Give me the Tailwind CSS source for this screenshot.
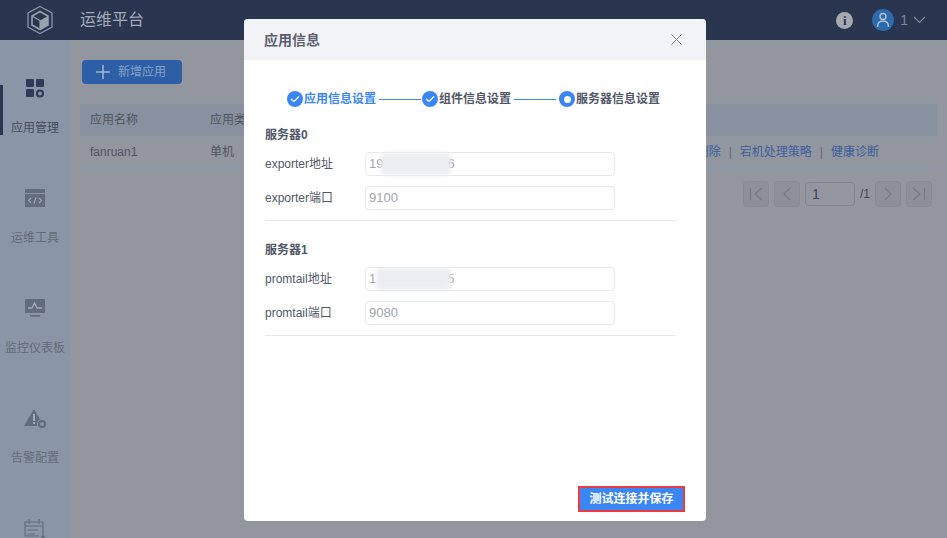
<!DOCTYPE html>
<html lang="zh">
<head>
  <meta charset="UTF-8" />
  <title>运维平台</title>
  <script src="https://cdn.jsdelivr.net/npm/@tailwindcss/browser@4"></script>
</head>
<body class="relative h-[538px] w-[947px] overflow-hidden bg-[#92969e] font-['Liberation_Sans','Noto_Sans_CJK_SC',sans-serif] text-xs text-[#4f5560]">
  <!-- top bar -->
  <header class="flex h-10 items-center bg-[#2a3550]">
    <div class="flex w-20 justify-center">
      <svg width="28" height="30" viewBox="0 0 28 30" fill="none">
        <path d="M14 1.500 26 8v14l-12 6.500L2 22V8z" stroke="#8b92a1" stroke-width="1.300"/>
        <path d="M14 6.500 22 11v9l-8 4.500L6 20v-9z" stroke="#9ba1ae" stroke-width="1.600"/>
        <path d="M14 15.500 22 11v9l-8 4.500z" fill="#9ba1ae"/>
        <path d="M6 11l8 4.500V24.500" stroke="#9ba1ae" stroke-width="1.200"/>
      </svg>
    </div>
    <span class="text-base text-[#a5abb8]">运维平台</span>
    <div class="ml-auto flex items-center pr-[21px]">
      <span class="flex h-[17px] w-[17px] items-center justify-center rounded-full bg-[#a6a9b0] font-['Liberation_Serif',serif] text-[13px] font-bold leading-none text-[#2a3550]">i</span>
      <span class="ml-[19px] flex h-[22px] w-[22px] items-center justify-center rounded-full bg-[#2c6aae]">
        <svg width="14" height="16" viewBox="0 0 14 16" fill="none" stroke="#b6c2d4" stroke-width="1.400">
          <circle cx="7" cy="4.500" r="3"/>
          <path d="M1.500 15c0-4 2.200-6 5.500-6s5.500 2 5.500 6"/>
        </svg>
      </span>
      <span class="ml-[6px] text-sm text-[#7f8798]">1</span>
      <svg class="ml-[5px]" width="13" height="8" viewBox="0 0 13 8" fill="none" stroke="#7f8798" stroke-width="1.200"><path d="M1 1l5.500 5.500L12 1"/></svg>
    </div>
  </header>

  <div class="flex h-[498px]">
    <!-- side nav -->
    <nav class="relative w-[70px] shrink-0 overflow-hidden bg-[#8a95a8] pt-[39px] text-[#656c79]">
      <div class="absolute left-0 top-[45px] h-[50px] w-[3px] bg-[#2a3550]"></div>
      <div class="flex h-[110px] flex-col items-center">
        <svg width="20" height="20" viewBox="0 0 20 20" fill="#2f3b58">
          <rect x="1" y="0" width="8" height="8" rx="1"/><rect x="11" y="0" width="8" height="8" rx="1"/><rect x="1" y="10" width="8" height="8" rx="1"/>
          <circle cx="15" cy="14.500" r="3" fill="none" stroke="#2f3b58" stroke-width="2.200"/>
        </svg>
        <span class="mt-[21px] whitespace-nowrap text-[#464d5c]">应用管理</span>
      </div>
      <div class="flex h-[110px] flex-col items-center">
        <svg width="20" height="20" viewBox="0 0 20 20">
          <rect x="0" y="0" width="20" height="4" fill="#626b7f"/><rect x="0" y="5" width="20" height="13" fill="#626b7f"/>
          <path d="M6 9l-2.500 2.500L6 14M14 9l2.500 2.500L14 14M11 8.500l-2 6" fill="none" stroke="#a2aaba" stroke-width="1.100"/>
        </svg>
        <span class="mt-[21px] whitespace-nowrap">运维工具</span>
      </div>
      <div class="flex h-[110px] flex-col items-center">
        <svg width="20" height="20" viewBox="0 0 20 20">
          <rect x="0" y="0" width="20" height="14" rx="1" fill="#626b7f"/><rect x="5" y="16" width="10" height="1.600" fill="#626b7f"/>
          <path d="M3 9h4l2.500-5 2.500 5h5" fill="none" stroke="#a2aaba" stroke-width="1.300"/>
        </svg>
        <span class="mt-[21px] whitespace-nowrap">监控仪表板</span>
      </div>
      <div class="flex h-[110px] flex-col items-center">
        <svg width="23" height="20" viewBox="0 0 23 20">
          <path d="M10 0 20 17H0z" fill="#626b7f"/><rect x="9" y="5" width="2" height="7" fill="#a2aaba"/><rect x="9" y="13" width="2" height="2" fill="#a2aaba"/>
          <circle cx="18" cy="15" r="5" fill="#8a95a8"/><circle cx="18" cy="15" r="3" fill="none" stroke="#626b7f" stroke-width="2"/>
        </svg>
        <span class="mt-[21px] whitespace-nowrap">告警配置</span>
      </div>
      <div class="flex flex-col items-center">
        <svg width="22" height="20" viewBox="0 0 22 20" fill="none" stroke="#626b7f" stroke-width="1.100">
          <path d="M15 17H1V3h18v10M1 7h18M5 0v5M15 0v5M4 11h10M4 15h7M19 13v6M17 17l2 2 2-2"/>
        </svg>
      </div>
    </nav>

    <!-- page content -->
    <main class="min-w-0 flex-1 pl-[10px] pr-[10px] pt-5">
      <button class="ml-[2px] flex h-6 w-[100px] items-center rounded-sm bg-[#2c5fa5] pl-[14px] text-[#87a1c7]">
        <svg width="14" height="14" viewBox="0 0 14 14" stroke="#a3b6d2" stroke-width="1.500"><path d="M7 0v14M0 7h14"/></svg>
        <span class="ml-[8px]">新增应用</span>
      </button>
      <div class="mt-5 flex h-8 items-center bg-[#88919f] pl-[10px]">
        <span class="w-[120px]">应用名称</span><span>应用类型</span>
      </div>
      <div class="flex h-[33px] items-center border-b border-[#8a99b2] pl-[10px]">
        <span class="w-[120px]">fanruan1</span><span>单机</span>
        <div class="ml-auto flex items-center pr-[58px] text-[#3c5f9f]">
          <span>删除</span><span class="mx-[8px] text-[#62687a]">|</span><span>宕机处理策略</span><span class="mx-[8px] text-[#62687a]">|</span><span>健康诊断</span>
        </div>
      </div>
      <div class="mt-[12px] flex items-center justify-end pr-[5px] text-[#3f4550]">
        <span class="flex h-[26px] w-[26px] items-center justify-center rounded-sm border border-[#868b94] bg-[#8c9099]">
          <svg width="14" height="14" viewBox="0 0 14 14" fill="none" stroke="#757b86" stroke-width="1.200"><path d="M1.500 1v12M13 1 6 7l7 6"/></svg>
        </span>
        <span class="ml-[5px] flex h-[26px] w-[26px] items-center justify-center rounded-sm border border-[#868b94] bg-[#8c9099]">
          <svg width="8" height="14" viewBox="0 0 8 14" fill="none" stroke="#757b86" stroke-width="1.200"><path d="M7 1 1 7l6 6"/></svg>
        </span>
        <span class="ml-[5px] flex h-[24px] w-[50px] items-center rounded-sm border border-[#7f848d] pl-[6px] text-sm">1</span>
        <span class="mx-[5px] w-[10px] text-xs">/1</span>
        <span class="flex h-[26px] w-[26px] items-center justify-center rounded-sm border border-[#868b94] bg-[#8c9099]">
          <svg width="8" height="14" viewBox="0 0 8 14" fill="none" stroke="#757b86" stroke-width="1.200"><path d="M1 1l6 6-6 6"/></svg>
        </span>
        <span class="ml-[5px] flex h-[26px] w-[26px] items-center justify-center rounded-sm border border-[#868b94] bg-[#8c9099]">
          <svg width="14" height="14" viewBox="0 0 14 14" fill="none" stroke="#757b86" stroke-width="1.200"><path d="M12.500 1v12M1 1l7 6-7 6"/></svg>
        </span>
      </div>
    </main>
  </div>

  <!-- dialog -->
  <section class="absolute left-[244px] top-[19px] flex h-[502px] w-[462px] flex-col rounded-sm bg-white text-[#505868]">
    <div class="flex h-[41px] shrink-0 items-center justify-between rounded-t-sm bg-[#f1f3f7] pl-5 pr-[24px]">
      <span class="text-sm font-semibold text-[#5a6070]">应用信息</span>
      <svg width="11" height="11" viewBox="0 0 11 11" stroke="#7b8494" stroke-width="1"><path d="M.5.500l10 10M10.500.500l-10 10"/></svg>
    </div>

    <div class="mt-[31px] flex h-4 items-center pl-[43px] font-semibold">
      <span class="flex h-4 w-4 items-center justify-center rounded-full bg-[#3b86f5]">
        <svg width="10" height="8" viewBox="0 0 10 8" fill="none" stroke="#fff" stroke-width="1.200"><path d="M1 4l3 2.500L9 1.500"/></svg>
      </span>
      <span class="ml-px text-[#3b86f5]">应用信息设置</span>
      <span class="ml-[3px] h-px w-[42px] bg-[#3b86f5]"></span>
      <span class="ml-px flex h-4 w-4 items-center justify-center rounded-full bg-[#3b86f5]">
        <svg width="10" height="8" viewBox="0 0 10 8" fill="none" stroke="#fff" stroke-width="1.200"><path d="M1 4l3 2.500L9 1.500"/></svg>
      </span>
      <span class="ml-px">组件信息设置</span>
      <span class="ml-[3px] h-px w-[42px] bg-[#3b86f5]"></span>
      <span class="ml-[3px] flex h-4 w-4 items-center justify-center rounded-full bg-[#3b86f5]">
        <span class="h-[7px] w-[7px] rounded-full bg-white"></span>
      </span>
      <span class="ml-px">服务器信息设置</span>
    </div>

    <div class="ml-[21px] mr-[31px] mt-[20px] border-b border-[#e6e8ec] pb-[10px]">
      <h3 class="text-xs font-semibold leading-4">服务器0</h3>
      <div class="mt-[9px] flex h-6 items-center">
        <label class="w-[100px]">exporter地址</label>
        <div class="relative flex h-6 w-[250px] items-center rounded-sm border border-[#e6e8ec] pl-[3px] text-[13px] text-[#a0a5ae]">
          <span>19</span><span class="ml-[64px]">6</span>
          <span class="absolute left-[15px] top-0 h-full w-[70px] bg-[#eceef1] blur-[2px]"></span>
        </div>
      </div>
      <div class="mt-[10px] flex h-6 items-center">
        <label class="w-[100px]">exporter端口</label>
        <div class="flex h-6 w-[250px] items-center rounded-sm border border-[#e6e8ec] pl-[3px] text-[13px] text-[#a0a5ae]">9100</div>
      </div>
    </div>

    <div class="ml-[21px] mr-[31px] mt-[21px] border-b border-[#e6e8ec] pb-[10px]">
      <h3 class="text-xs font-semibold leading-4">服务器1</h3>
      <div class="mt-[9px] flex h-6 items-center">
        <label class="w-[100px]">promtail地址</label>
        <div class="relative flex h-6 w-[250px] items-center rounded-sm border border-[#e6e8ec] pl-[3px] text-[13px] text-[#a0a5ae]">
          <span>1</span><span class="ml-[71px]">5</span>
          <span class="absolute left-[10px] top-0 h-full w-[75px] bg-[#eceef1] blur-[2px]"></span>
        </div>
      </div>
      <div class="mt-[10px] flex h-6 items-center">
        <label class="w-[100px]">promtail端口</label>
        <div class="flex h-6 w-[250px] items-center rounded-sm border border-[#e6e8ec] pl-[3px] text-[13px] text-[#a0a5ae]">9080</div>
      </div>
    </div>

    <div class="mt-auto flex justify-end pb-[9px] pr-[21px]">
      <button class="h-[26px] w-[107px] border-2 border-[#ef3b3f] bg-[#3b86f5] text-xs font-semibold text-white">测试连接并保存</button>
    </div>
  </section>
</body>
</html>
